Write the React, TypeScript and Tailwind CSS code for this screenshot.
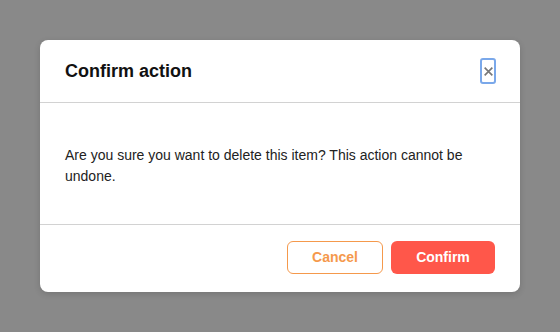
export default function App() {
  return (
    <div className="w-[560px] h-[332px] bg-[#898989] flex items-center justify-center font-['Liberation_Sans',Arial,sans-serif]">
      <div className="w-[480px] bg-white rounded-lg shadow-[0_2px_6px_rgba(0,0,0,0.15)] flex flex-col">
        {/* Header */}
        <div className="h-[63px] px-[25px] flex items-center justify-between border-b border-[#d2d2d2]">
          <h2 className="text-[18px] font-bold text-[#111]">Confirm action</h2>
          <button className="w-[16px] h-[26px] -mr-px border-2 border-[#7aa8ea] rounded-[3px] flex items-center justify-center text-[#777]">
            <svg width="11" height="11" viewBox="0 0 10 10">
              <path d="M1.5 1.5 L8.5 8.5 M8.5 1.5 L1.5 8.5" stroke="currentColor" strokeWidth="1.5" />
            </svg>
          </button>
        </div>

        {/* Body */}
        <div className="px-[25px] pt-[42px] pb-[37px] border-b border-[#d2d2d2]">
          <p className="text-[14px] leading-[21px] text-[#222]">
            Are you sure you want to delete this item? This action cannot be undone.
          </p>
        </div>

        {/* Footer */}
        <div className="px-[25px] pt-4 pb-[18px] flex justify-end gap-2">
          <button className="w-[96px] h-[33px] rounded-md border border-[#f5994c] text-[#f5994c] text-[14px] font-bold">
            Cancel
          </button>
          <button className="w-[104px] h-[33px] rounded-md bg-[#ff574a] text-white text-[14px] font-bold">
            Confirm
          </button>
        </div>
      </div>
    </div>
  );
}
